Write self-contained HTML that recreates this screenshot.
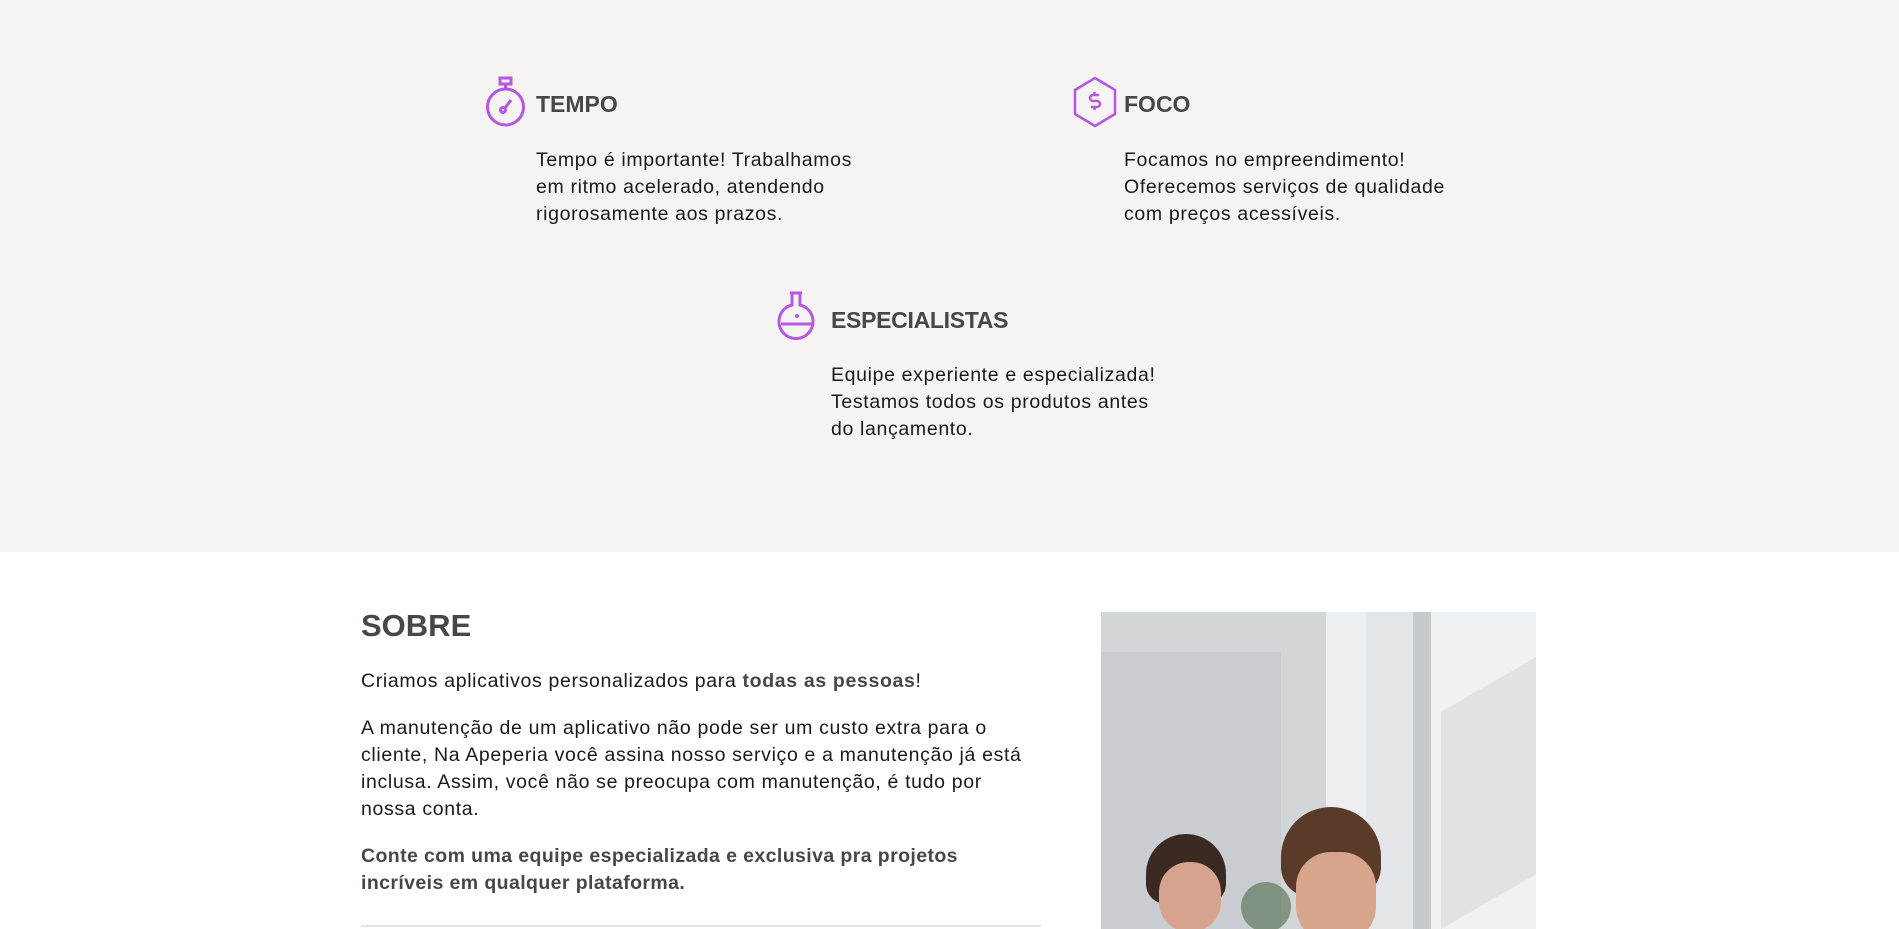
<!DOCTYPE html>
<html><head><meta charset="utf-8"><style>
*{margin:0;padding:0;box-sizing:border-box}
body{width:1899px;height:929px;overflow:hidden;background:#fff;font-family:"Liberation Sans",Arial,sans-serif;position:relative}
.gray{position:absolute;left:0;top:0;width:1899px;height:552px;background:#f5f4f3}
.t{position:absolute;font-weight:bold;font-size:23px;color:#4a4646;line-height:30px}
.p{position:absolute;font-size:19.5px;letter-spacing:0.65px;color:#1a1a1a;line-height:27px;white-space:nowrap}
svg{position:absolute}
.h{position:absolute;left:361px;top:608px;font-size:31px;font-weight:bold;color:#4a4646}
.photo{position:absolute;left:1101px;top:612px;width:435px;height:317px;overflow:hidden;background:#e3e6e8}
</style></head><body>
<div class="gray"></div>

<svg style="left:484px;top:76px" width="44" height="52" viewBox="0 0 44 52"><g fill="none" stroke="#b557e0" stroke-width="3"><rect x="16" y="2" width="11" height="6"/><line x1="21.5" y1="8" x2="21.5" y2="13"/><circle cx="21.5" cy="31" r="18"/><circle cx="19" cy="34" r="2.5"/><line x1="21" y1="32" x2="27" y2="24"/></g></svg>
<div class="t" style="left:536px;top:89px">TEMPO</div>
<div class="p" style="left:536px;top:147px">Tempo é importante! Trabalhamos<br>em ritmo acelerado, atendendo<br>rigorosamente aos prazos.</div>

<svg style="left:1072px;top:76px" width="46" height="52" viewBox="0 0 46 52"><g fill="none" stroke="#b557e0" stroke-width="2.5"><polygon points="23,2 43,14 43,38 23,50 3,38 3,14"/><path d="M27 19h-6a3 3 0 0 0 0 6h4a3 3 0 0 1 0 6h-6M22.5 16v3M22.5 31v3"/></g></svg>
<div class="t" style="left:1124px;top:89px">FOCO</div>
<div class="p" style="left:1124px;top:147px">Focamos no empreendimento!<br>Oferecemos serviços de qualidade<br>com preços acessíveis.</div>

<svg style="left:776px;top:290px" width="42" height="56" viewBox="0 0 42 56"><g fill="none" stroke="#b557e0" stroke-width="3"><path d="M14 3h12M16 3v12A17 17 0 1 0 24 15V3"/><line x1="5" y1="34" x2="37" y2="34"/></g><circle cx="21" cy="26" r="2" fill="#b557e0"/></svg>
<div class="t" style="left:831px;top:305px;letter-spacing:-0.3px">ESPECIALISTAS</div>
<div class="p" style="left:831px;top:362px">Equipe experiente e especializada!<br>Testamos todos os produtos antes<br>do lançamento.</div>

<div class="h">SOBRE</div>
<div class="p" style="left:361px;top:668px">Criamos aplicativos personalizados para <b style="color:#4a4646">todas as pessoas</b>!</div>
<div class="p" style="left:361px;top:715px">A manutenção de um aplicativo não pode ser um custo extra para o<br>cliente, Na Apeperia você assina nosso serviço e a manutenção já está<br>inclusa. Assim, você não se preocupa com manutenção, é tudo por<br>nossa conta.</div>
<div class="p" style="left:361px;top:843px;font-weight:bold;color:#4a4646;letter-spacing:0.4px">Conte com uma equipe especializada e exclusiva pra projetos<br>incríveis em qualquer plataforma.</div>
<div style="position:absolute;left:361px;top:925px;width:680px;height:2px;background:#e2e2e2"></div>

<div class="photo">
<div style="position:absolute;left:0;top:0;width:230px;height:317px;background:#d3d6d9"></div>
<div style="position:absolute;left:0;top:40px;width:180px;height:277px;background:#c9cdd1"></div>
<div style="position:absolute;left:225px;top:0;width:40px;height:317px;background:#eceef0"></div>
<div style="position:absolute;left:312px;top:0;width:18px;height:317px;background:#c8c9ca"></div>
<div style="position:absolute;left:330px;top:0;width:105px;height:317px;background:#eff1f2"></div>
<div style="position:absolute;left:340px;top:100px;width:95px;height:217px;background:#dfe3e5;transform:skewY(-30deg);transform-origin:left top"></div>
<div style="position:absolute;left:45px;top:222px;width:80px;height:70px;border-radius:40px 40px 20px 20px;background:#3a2a22"></div>
<div style="position:absolute;left:58px;top:250px;width:62px;height:70px;border-radius:30px;background:#d6a48e"></div>
<div style="position:absolute;left:180px;top:195px;width:100px;height:90px;border-radius:50px 50px 30px 30px;background:#5a3a28"></div>
<div style="position:absolute;left:195px;top:240px;width:80px;height:90px;border-radius:35px;background:#d7a58c"></div>
<div style="position:absolute;left:140px;top:270px;width:50px;height:50px;border-radius:25px;background:#4f6a47;opacity:.6"></div>
</div>
</body></html>
